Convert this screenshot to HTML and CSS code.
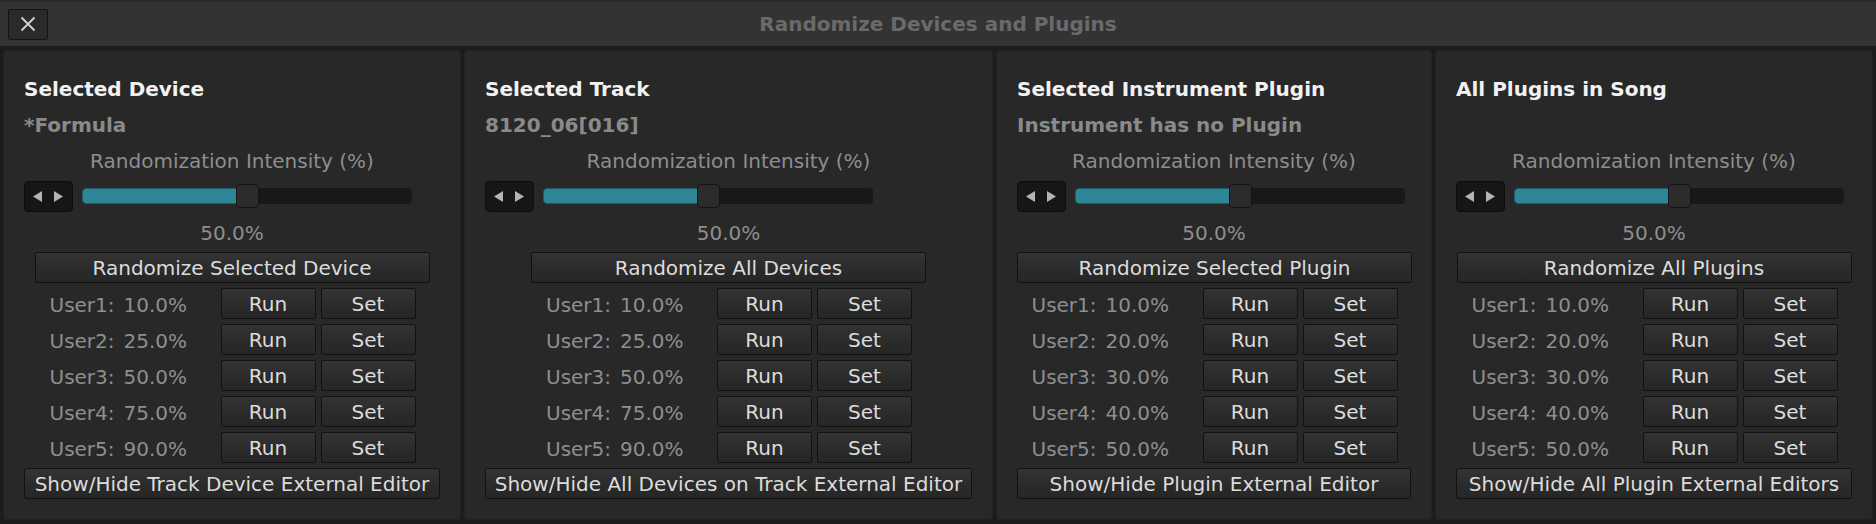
FILE: index.html
```html
<!DOCTYPE html>
<html lang="en">
<head>
  <meta charset="UTF-8" />
  <title>Randomize Devices and Plugins</title>
  <link rel="stylesheet" href="styles.css">
</head>
<body>

  <div class="titlebar">
    <button class="close-btn" aria-label="Close">
      <svg width="16" height="16" viewBox="0 0 16 16">
        <path d="M1.5 1.5 L14.5 14.5 M14.5 1.5 L1.5 14.5" stroke="#d2d2d2" stroke-width="1.8" fill="none" />
      </svg>
    </button>
    <div class="window-title">Randomize Devices and Plugins</div>
    <div></div>
  </div>

  <div class="panels">

    <section class="panel">
      <div class="title">Selected Device</div>
      <div class="subtitle">*Formula</div>
      <div class="label">Randomization Intensity (%)</div>
      <div class="slider-row">
        <div class="spin">
          <svg width="47" height="29" viewBox="0 0 47 29"><polygon points="17,9 8,14.5 17,20" fill="#b4b4b4" /><polygon points="29,9 38,14.5 29,20" fill="#b4b4b4" /></svg>
        </div>
        <div class="track"><div class="fill" style="width: 50%"></div><div class="handle" style="left: calc(50% - 11px)"></div></div>
      </div>
      <div class="value">50.0%</div>
      <button class="btn btn-main">Randomize Selected Device</button>
      <div class="rows">
        <div class="row"><span class="user">User1:</span><span class="pct">10.0%</span><button class="btn">Run</button><button class="btn">Set</button></div>
        <div class="row"><span class="user">User2:</span><span class="pct">25.0%</span><button class="btn">Run</button><button class="btn">Set</button></div>
        <div class="row"><span class="user">User3:</span><span class="pct">50.0%</span><button class="btn">Run</button><button class="btn">Set</button></div>
        <div class="row"><span class="user">User4:</span><span class="pct">75.0%</span><button class="btn">Run</button><button class="btn">Set</button></div>
        <div class="row"><span class="user">User5:</span><span class="pct">90.0%</span><button class="btn">Run</button><button class="btn">Set</button></div>
      </div>
      <button class="btn btn-full">Show/Hide Track Device External Editor</button>
    </section>

    <section class="panel">
      <div class="title">Selected Track</div>
      <div class="subtitle">8120_06[016]</div>
      <div class="label">Randomization Intensity (%)</div>
      <div class="slider-row">
        <div class="spin">
          <svg width="47" height="29" viewBox="0 0 47 29"><polygon points="17,9 8,14.5 17,20" fill="#b4b4b4" /><polygon points="29,9 38,14.5 29,20" fill="#b4b4b4" /></svg>
        </div>
        <div class="track"><div class="fill" style="width: 50%"></div><div class="handle" style="left: calc(50% - 11px)"></div></div>
      </div>
      <div class="value">50.0%</div>
      <button class="btn btn-main">Randomize All Devices</button>
      <div class="rows">
        <div class="row"><span class="user">User1:</span><span class="pct">10.0%</span><button class="btn">Run</button><button class="btn">Set</button></div>
        <div class="row"><span class="user">User2:</span><span class="pct">25.0%</span><button class="btn">Run</button><button class="btn">Set</button></div>
        <div class="row"><span class="user">User3:</span><span class="pct">50.0%</span><button class="btn">Run</button><button class="btn">Set</button></div>
        <div class="row"><span class="user">User4:</span><span class="pct">75.0%</span><button class="btn">Run</button><button class="btn">Set</button></div>
        <div class="row"><span class="user">User5:</span><span class="pct">90.0%</span><button class="btn">Run</button><button class="btn">Set</button></div>
      </div>
      <button class="btn btn-full">Show/Hide All Devices on Track External Editor</button>
    </section>

    <section class="panel">
      <div class="title">Selected Instrument Plugin</div>
      <div class="subtitle">Instrument has no Plugin</div>
      <div class="label">Randomization Intensity (%)</div>
      <div class="slider-row">
        <div class="spin">
          <svg width="47" height="29" viewBox="0 0 47 29"><polygon points="17,9 8,14.5 17,20" fill="#b4b4b4" /><polygon points="29,9 38,14.5 29,20" fill="#b4b4b4" /></svg>
        </div>
        <div class="track"><div class="fill" style="width: 50%"></div><div class="handle" style="left: calc(50% - 11px)"></div></div>
      </div>
      <div class="value">50.0%</div>
      <button class="btn btn-main">Randomize Selected Plugin</button>
      <div class="rows">
        <div class="row"><span class="user">User1:</span><span class="pct">10.0%</span><button class="btn">Run</button><button class="btn">Set</button></div>
        <div class="row"><span class="user">User2:</span><span class="pct">20.0%</span><button class="btn">Run</button><button class="btn">Set</button></div>
        <div class="row"><span class="user">User3:</span><span class="pct">30.0%</span><button class="btn">Run</button><button class="btn">Set</button></div>
        <div class="row"><span class="user">User4:</span><span class="pct">40.0%</span><button class="btn">Run</button><button class="btn">Set</button></div>
        <div class="row"><span class="user">User5:</span><span class="pct">50.0%</span><button class="btn">Run</button><button class="btn">Set</button></div>
      </div>
      <button class="btn btn-full">Show/Hide Plugin External Editor</button>
    </section>

    <section class="panel">
      <div class="title">All Plugins in Song</div>
      <div class="subtitle"></div>
      <div class="label">Randomization Intensity (%)</div>
      <div class="slider-row">
        <div class="spin">
          <svg width="47" height="29" viewBox="0 0 47 29"><polygon points="17,9 8,14.5 17,20" fill="#b4b4b4" /><polygon points="29,9 38,14.5 29,20" fill="#b4b4b4" /></svg>
        </div>
        <div class="track"><div class="fill" style="width: 50%"></div><div class="handle" style="left: calc(50% - 11px)"></div></div>
      </div>
      <div class="value">50.0%</div>
      <button class="btn btn-main">Randomize All Plugins</button>
      <div class="rows">
        <div class="row"><span class="user">User1:</span><span class="pct">10.0%</span><button class="btn">Run</button><button class="btn">Set</button></div>
        <div class="row"><span class="user">User2:</span><span class="pct">20.0%</span><button class="btn">Run</button><button class="btn">Set</button></div>
        <div class="row"><span class="user">User3:</span><span class="pct">30.0%</span><button class="btn">Run</button><button class="btn">Set</button></div>
        <div class="row"><span class="user">User4:</span><span class="pct">40.0%</span><button class="btn">Run</button><button class="btn">Set</button></div>
        <div class="row"><span class="user">User5:</span><span class="pct">50.0%</span><button class="btn">Run</button><button class="btn">Set</button></div>
      </div>
      <button class="btn btn-full">Show/Hide All Plugin External Editors</button>
    </section>

  </div>

</body>
</html>
```

FILE: styles.css
```css
* { box-sizing: border-box; }
html, body {
  margin: 0; padding: 0;
  background: #1c1c1c;
  font-family: 'DejaVu Sans', 'Liberation Sans', sans-serif;
  font-size: 20px;
  color: #8e8e8e;
}
body { width: 1876px; height: 524px; overflow: hidden; }

.titlebar {
  height: 46px;
  background: #333333;
  border-top: 2px solid #2a2a2a;
  display: grid;
  grid-template-columns: 1fr auto 1fr;
  align-items: center;
}
.close-btn {
  justify-self: start;
  margin: 0 0 0 8px;
  width: 40px; height: 31px;
  background: #2a2a2a;
  border: 1px solid #141414;
  border-radius: 2px;
  padding: 0;
  display: flex; align-items: center; justify-content: center;
}
.window-title {
  font-weight: bold;
  color: #6a6a6a;
  line-height: 24px;
}

.panels {
  display: grid;
  grid-template-columns: 458px 529px 436px 438px;
  gap: 3px;
  padding: 4px 3px;
  height: 478px;
}
.panel {
  background: #282828;
  border: 1px solid #222;
  border-radius: 4px;
  padding: 26px 20px 0 20px;
  display: flex; flex-direction: column;
}

.title, .subtitle, .label, .value {
  line-height: 24px; height: 24px;
  white-space: nowrap;
}
.title { font-weight: bold; color: #f2f2f2; }
.subtitle { font-weight: bold; color: #8a8a8a; margin-top: 12px; }
.label { text-align: center; margin-top: 12px; }
.value { text-align: center; margin-top: 9px; }

.slider-row {
  margin-top: 7px;
  height: 32px;
  display: flex; align-items: center; gap: 9px;
}
.spin {
  width: 49px; height: 31px;
  background: #161616;
  border: 1px solid #0d0d0d;
  border-radius: 4px;
}
.spin svg { display: block; }
.track {
  position: relative;
  width: 330px; height: 16px;
  background: #181818;
  border-radius: 4px;
}
.fill {
  height: 100%;
  background: #2e8698;
  border: 1px solid #1f5c68;
  border-radius: 4px 0 0 4px;
}
.handle {
  position: absolute; top: -4px;
  width: 23px; height: 24px;
  background: #2c2c2c;
  border: 1px solid #141414;
  border-radius: 4px;
}

.btn {
  font-family: inherit;
  font-size: 20px;
  color: #dcdcdc;
  height: 31px;
  padding: 1px 0 0;
  background: linear-gradient(#333333, #2b2b2b 55%, #262626);
  border: 1px solid #111;
  border-radius: 2px;
  white-space: nowrap;
}
.btn-main { width: 395px; margin: 7px auto 0; }
.btn-full { width: 100%; margin-top: 5px; }

.rows {
  margin-top: 5px;
  display: flex; flex-direction: column; gap: 5px;
}
.row {
  width: 367px;
  margin: 0 auto;
  display: flex; align-items: center;
  height: 31px;
}
.row .user { width: 75px; padding: 2px 0 0 1px; }
.row .pct { flex: 1; padding-top: 2px; }
.row .btn { width: 95px; }
.row .btn + .btn { margin-left: 5px; }
```
